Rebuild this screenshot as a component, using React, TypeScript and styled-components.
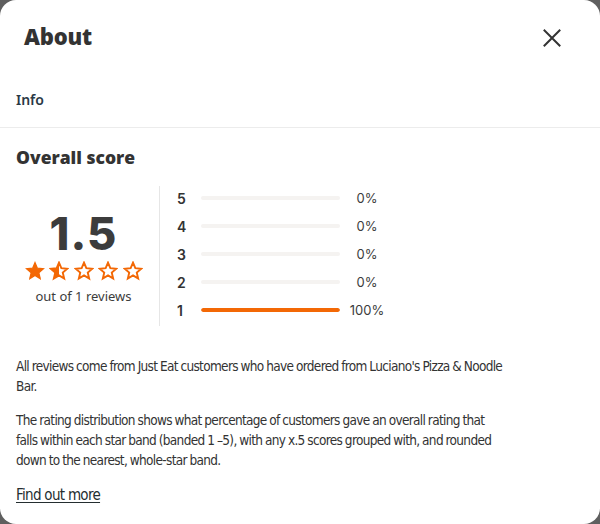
import React from "react";
import styled, { createGlobalStyle } from "styled-components";

const Global = createGlobalStyle`
  html, body { margin: 0; padding: 0; background: #5f5f5f; }
  body { width: 600px; height: 524px; overflow: hidden; }
  * { box-sizing: border-box; }
`;

const Modal = styled.div`
  width: 600px;
  height: 524px;
  background: #fff;
  border-radius: 16px;
  overflow: hidden;
  color: #242e30;
  font-family: "DejaVu Sans Condensed", "Liberation Sans", sans-serif;
  display: flex;
  flex-direction: column;
`;

const Header = styled.div`
  display: flex;
  align-items: center;
  justify-content: space-between;
  padding: 0 36px 0 24px;
  height: 76px;
`;

const Title = styled.h1`
  margin: 0 0 5px 0;
  font-family: "Open Sans", sans-serif;
  font-weight: 800;
  font-size: 22px;
  letter-spacing: -0.2px;
  color: #333;
`;

const CloseButton = styled.button`
  border: 0;
  background: none;
  padding: 0;
  width: 24px;
  height: 24px;
  display: flex;
  align-items: center;
  justify-content: center;
  cursor: pointer;
`;

const Tabs = styled.div`
  display: flex;
  padding: 0 16px;
  height: 52px;
  align-items: center;
  border-bottom: 1px solid #ececec;
`;

const Tab = styled.span`
  font-family: "Noto Sans", sans-serif;
  font-weight: 600;
  font-size: 14px;
  color: #2a3846;
  padding-bottom: 4px;
`;

const Content = styled.div`
  padding: 18px 16px 0 16px;
  display: flex;
  flex-direction: column;
`;

const SectionTitle = styled.h2`
  margin: 0;
  font-family: "Open Sans", sans-serif;
  font-weight: 800;
  font-size: 17.5px;
  color: #333;
  line-height: 22px;
`;

const ScoreArea = styled.div`
  display: flex;
  margin-top: 18px;
  height: 140px;
`;

const Summary = styled.div`
  width: 144px;
  display: flex;
  flex-direction: column;
  align-items: center;
  justify-content: center;
  border-right: 1px solid #e6e6e6;
  padding: 4px 8px 0 0;
`;

const BigScore = styled.div`
  font-family: "Inter", sans-serif;
  font-weight: 800;
  font-size: 45px;
  line-height: 44px;
  color: #3c3c3c;
  letter-spacing: 1px;
`;

const Stars = styled.div`
  display: flex;
  gap: 4.5px;
  margin-top: 5px;
`;

const OutOf = styled.div`
  font-family: "Noto Sans", sans-serif;
  font-size: 13px;
  color: #3c3c3c;
  margin-top: 6px;
`;

const Distribution = styled.div`
  display: flex;
  flex-direction: column;
  justify-content: center;
  padding-left: 17px;
  padding-bottom: 4px;
`;

const DistRow = styled.div`
  display: flex;
  align-items: center;
  height: 28px;
  flex-shrink: 0;
`;

const DistLabel = styled.span`
  font-family: "Inter", sans-serif;
  font-weight: 600;
  font-size: 14px;
  color: #333;
  width: 24px;
`;

const Track = styled.div`
  width: 139px;
  height: 4px;
  border-radius: 2px;
  background: #f5f3f1;
  overflow: hidden;
`;

const Fill = styled.div`
  height: 100%;
  background: #f36805;
  border-radius: 2px;
`;

const Percent = styled.span`
  font-family: "Inter", sans-serif;
  font-size: 13px;
  color: #3c3c3c;
  width: 52px;
  text-align: center;
  padding-left: 2px;
`;

const Paragraph = styled.p`
  margin: 0;
  font-size: 13.5px;
  line-height: 20px;
  letter-spacing: -0.68px;
  word-spacing: -0.5px;
  color: #333;
`;

const Paragraphs = styled.div`
  display: flex;
  flex-direction: column;
  gap: 14px;
  margin-top: 30px;
  max-width: 491px;
`;

const Link = styled.a`
  margin-top: 16px;
  font-size: 15px;
  letter-spacing: -0.7px;
  color: #242e30;
  text-decoration: underline;
  text-underline-offset: 2px;
  align-self: flex-start;
`;

const STAR = "M12 17.27L18.18 21l-1.64-7.03L22 9.24l-7.19-.61L12 2 9.19 8.63 2 9.24l5.46 4.73L5.82 21z";

function Star({ fill }: { fill: "full" | "half" | "empty" }) {
  const id = "half-clip";
  return (
    <svg width="20" height="20" viewBox="0 0 24 24">
      {fill === "half" && (
        <defs>
          <clipPath id={id}>
            <rect x="0" y="0" width="12" height="24" />
          </clipPath>
        </defs>
      )}
      {fill === "full" ? (
        <path d={STAR} fill="#f36805" stroke="#f36805" strokeWidth="1.6" strokeLinejoin="miter" />
      ) : (
        <>
          {fill === "half" && <path d={STAR} fill="#f36805" clipPath={`url(#${id})`} />}
          <path d={STAR} fill="none" stroke="#f36805" strokeWidth="2.3" strokeLinejoin="miter" />
        </>
      )}
    </svg>
  );
}

const rows = [
  { n: 5, p: 0 },
  { n: 4, p: 0 },
  { n: 3, p: 0 },
  { n: 2, p: 0 },
  { n: 1, p: 100 },
];

export default function App() {
  return (
    <>
      <Global />
      <Modal>
        <Header>
          <Title>About</Title>
          <CloseButton aria-label="Close">
            <svg width="20" height="20" viewBox="0 0 20 20">
              <path d="M2.5 2.5l15 15M17.5 2.5l-15 15" stroke="#333" strokeWidth="2" strokeLinecap="square" />
            </svg>
          </CloseButton>
        </Header>
        <Tabs>
          <Tab>Info</Tab>
        </Tabs>
        <Content>
          <SectionTitle>Overall score</SectionTitle>
          <ScoreArea>
            <Summary>
              <BigScore>1.5</BigScore>
              <Stars>
                <Star fill="full" />
                <Star fill="half" />
                <Star fill="empty" />
                <Star fill="empty" />
                <Star fill="empty" />
              </Stars>
              <OutOf>out of 1 reviews</OutOf>
            </Summary>
            <Distribution>
              {rows.map((r) => (
                <DistRow key={r.n}>
                  <DistLabel>{r.n}</DistLabel>
                  <Track>
                    <Fill style={{ width: `${r.p}%` }} />
                  </Track>
                  <Percent>{r.p}%</Percent>
                </DistRow>
              ))}
            </Distribution>
          </ScoreArea>
          <Paragraphs>
            <Paragraph>
              All reviews come from Just Eat customers who have ordered from Luciano's Pizza &amp; Noodle Bar.
            </Paragraph>
            <Paragraph>
              The rating distribution shows what percentage of customers gave an overall rating that falls within
              each star band (banded 1 –5), with any x.5 scores grouped with, and rounded down to the nearest,
              whole-star band.
            </Paragraph>
          </Paragraphs>
          <Link href="#">Find out more</Link>
        </Content>
      </Modal>
    </>
  );
}
